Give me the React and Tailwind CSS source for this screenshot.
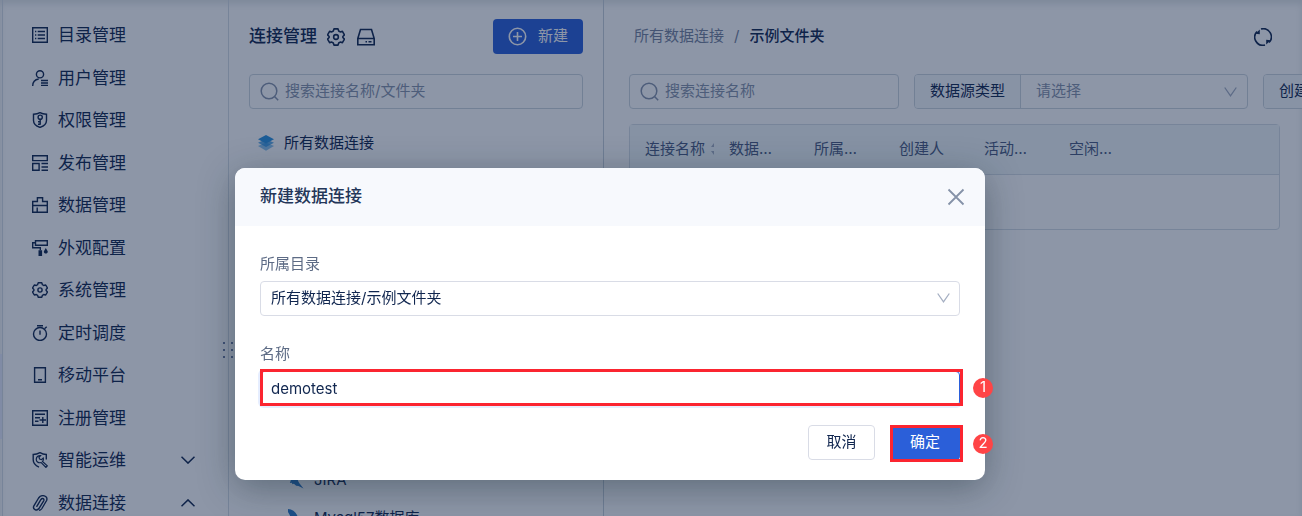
import { useState } from 'react'

function Svg({ children, className = 'size-4', box = 16, width = 1.4 }) {
    return (
        <svg
            className={`${className} shrink-0`}
            viewBox={`0 0 ${box} ${box}`}
            fill="none"
            stroke="currentColor"
            strokeWidth={width}
            aria-hidden="true"
        >
            {children}
        </svg>
    )
}

// rounded six-lobed cog, shared by the menu and the panel header
function Gear() {
    return (
        <>
            <path
                d="M6.200.8h3.600l.6 1.900 1.300.8 2-.5 1.800 3.100-1.400 1.400v1l1.400 1.400-1.800 3.100-2-.5-1.300.8-.6 1.900H6.200l-.6-1.900-1.300-.8-2 .5L.5 9.900l1.400-1.400v-1L.5 6.100 2.300 3l2 .5 1.300-.8z"
                strokeLinejoin="round"
            />
            <circle cx="8" cy="8" r="2.100" />
        </>
    )
}

function Chevron({ className, up = false }) {
    return (
        <svg className={className} viewBox="0 0 14 8" fill="none" stroke="currentColor" strokeWidth="1.5" aria-hidden="true">
            <path d={up ? 'M.5 7.200L7 .9l6.500 6.300' : 'M.5.8L7 7.100 13.500.8'} />
        </svg>
    )
}

function SelectArrow() {
    return (
        <svg
            className="pointer-events-none absolute top-3 right-[10px] h-[10px] w-[13px] text-[#a5afc2]"
            viewBox="0 0 13 10"
            fill="none"
            stroke="currentColor"
            strokeWidth="1.3"
            aria-hidden="true"
        >
            <path d="M.7.5l5.800 8.300L12.300.5" />
        </svg>
    )
}

function SearchIcon() {
    return (
        <Svg className="size-5" box={20} width={1.5}>
            <circle cx="9" cy="9" r="7.800" />
            <path d="M14.500 14.500l3.700 3.700" />
        </Svg>
    )
}

const menu = [
    {
        name: '目录管理',
        icon: <path d="M.7.7h14.600v14.600H.7zM3 4.500h1.300M3 8h1.300M3 11.500h1.300M5.700 4.500H13M5.700 8H13M5.700 11.500H13" />,
    },
    {
        name: '用户管理',
        icon: (
            <>
                <circle cx="8" cy="4.300" r="3.600" />
                <path d="M.7 16c0-4 2.400-6.500 6-7M9 10.500h7M9 13h7M9 15.400h7" />
            </>
        ),
    },
    {
        name: '权限管理',
        icon: (
            <>
                <path d="M8 .7c2 1.200 4.300 1.500 6.500 1.500v6.300c0 3.500-3 5.700-6.500 6.900-3.500-1.200-6.500-3.400-6.500-6.900V2.200C3.700 2.200 6 1.900 8 .7z" />
                <circle cx="8.200" cy="5.200" r="2.100" />
                <path d="M8.200 7.300v5.500M8.200 9.800H6M8.200 12.300H6" />
            </>
        ),
    },
    { name: '发布管理', icon: <path d="M.7.7h14.600v4.900H.7zM.7 8.500h6.400v6.800H.7zM9.500 8.500H16M9.500 12H16M9.500 15.300H16" /> },
    { name: '数据管理', icon: <path d="M.7 4.500h4.700V.7h5.200v3.800h4.700v10.800H.7zM.7 8.500h14.600M5.200 10.500v4.800" /> },
    {
        name: '外观配置',
        icon: (
            <>
                <path d="M3.500.7h11.800v4.500H3.500zM3.500 2.800H.7v5h7.600v2.500" />
                <path d="M6.500 10.300h3.600V16H6.500zM13.800 8l1.900 3.200c.4 1.500-.7 2.400-1.900 2.400s-2.300-.9-1.900-2.400z" fill="currentColor" stroke="none" />
            </>
        ),
    },
    { name: '系统管理', icon: <Gear /> },
    {
        name: '定时调度',
        icon: (
            <>
                <circle cx="8" cy="9" r="6.500" />
                <path d="M5 .8h6M8 5.500v4.200M12.500 3.700l2.200-1.900" />
            </>
        ),
    },
    { name: '移动平台', icon: <path d="M2.600.7h10.800v14.600H2.600zM6 12.700h4" /> },
    {
        name: '注册管理',
        icon: <path d="M.7.7h14.600v14.600H.7zM3 4.200h10M3 7.800h5M3 11.200h3.500M7.500 10h6.500M10.800 7v6" />,
    },
    {
        name: '智能运维',
        arrow: 'down',
        icon: (
            <>
                <path d="M14.300 7.500V2.500C12 2.500 9.700 1.800 8 .7 5.800 1.900 3.500 2.500 1.200 2.500v5.300c0 3.600 2.300 5.800 5.800 7.300" />
                <path
                    d="M8.600 3.600L7 5.300l.6 1.800 1.900.5 1.700-1.600c.5 1.500.1 2.600-.7 3.400l4.800 4.500-1.400 1.500-4.700-4.800c-3 .7-5.200-1.100-4.900-3.700.2-2.100 2.200-3.600 4.300-3.300z"
                    strokeWidth="1.200"
                />
            </>
        ),
    },
    {
        name: '数据连接',
        arrow: 'up',
        icon: (
            <path
                d="M4.800 11.300l4.200-6.800c1.300-1.900 3.700-.6 2.700 1.300l-4.800 7.700c-2 3-6.700.7-5-2.700L6.600 3c2.600-3.900 9.900-2.600 8 2.500l-4.700 8c-.5.8-1.200 1.500-2.200 1.700"
                strokeLinecap="round"
            />
        ),
    },
]

const columns = ['数据…', '所属…', '创建人', '活动…', '空闲…']

function Sidebar() {
    return (
        <aside className="relative flex w-[229px] shrink-0 border-r border-[#d5dde5]">
            <div className="w-[3px] border-r border-[#d5dde5] pt-[354px]">
                <div className="h-[85px] bg-[#e6ebfb]" />
            </div>
            <ul className="flex-1 pt-[23px] pr-[33px] pl-[29px]">
                {menu.map((item) => (
                    <li key={item.name} className="h-6 odd:mb-[19px] even:mb-[18px]">
                        <a href="#" className="flex h-6 items-center gap-[10px] text-[17px] leading-6">
                            <Svg>{item.icon}</Svg>
                            {item.name}
                            {item.arrow && <Chevron className="ml-auto h-2 w-[14px]" up={item.arrow === 'up'} />}
                        </a>
                    </li>
                ))}
            </ul>
            {/* drag handle */}
            <div className="absolute top-[342px] -right-[5px] grid grid-cols-2 gap-x-[6px] gap-y-[5px]">
                {[0, 1, 2, 3, 4, 5].map((dot) => (
                    <span key={dot} className="size-[2px] bg-[#6c7ba0]" />
                ))}
            </div>
        </aside>
    )
}

function SearchBox({ label, className }) {
    return (
        <label className={`flex h-[35px] items-center gap-[5px] rounded border border-[#ccd6de] px-[10px] text-[#8793ab] ${className}`}>
            <SearchIcon />
            <input
                type="search"
                aria-label={label}
                placeholder={label}
                className="min-w-0 flex-1 bg-transparent text-[15px] outline-none placeholder:text-[#8793ab]"
            />
        </label>
    )
}

function DolphinIcon() {
    return (
        <svg className="h-5 w-4 shrink-0" viewBox="0 0 16 20" fill="#2b78c4" aria-hidden="true">
            <path d="M0 1c4 .3 7.500 2.500 9 6 .9 2.200.8 4.200 2.200 6l4.300 5.500-5-2.500-2.300-.3-2.300-2-1.500.5-.5-1.500-2 .3 1-3-1.200-3L0 4z" />
        </svg>
    )
}

function ConnectionPanel() {
    return (
        <section className="w-[375px] shrink-0 border-r border-[#c6d0da] pt-[19px] pr-5 pl-5">
            <header className="flex h-[35px] items-center">
                <h2 className="text-[17px] font-medium">连接管理</h2>
                <button type="button" aria-label="设置" className="ml-[10px]">
                    <Svg className="size-[18px]">
                        <Gear />
                    </Svg>
                </button>
                <button type="button" aria-label="存储" className="ml-3">
                    <Svg className="size-[18px]" box={18} width={1.6}>
                        <path d="M.8 10.500L3.500 1.500h11l2.700 9v6.300H.8zM.8 10.500h16.400M8.500 13.700h1.500M11.500 13.700h3" />
                    </Svg>
                </button>
                <button type="button" className="ml-auto flex h-[35px] items-center gap-[10px] rounded bg-[#2b5fd9] px-[15px] text-[15px] text-white">
                    <Svg className="size-5" box={20} width={1.6}>
                        <circle cx="9.500" cy="9.500" r="8.200" />
                        <path d="M9.500 5v9M5 9.500h9" />
                    </Svg>
                    新建
                </button>
            </header>
            <SearchBox label="搜索连接名称/文件夹" className="mt-5" />
            <ul className="mt-[15px] text-[15px]">
                <li className="flex h-[38px] items-center gap-[10px] pl-[9px]">
                    <svg className="size-4 shrink-0" viewBox="0 0 16 16" fill="#2b93e0" aria-hidden="true">
                        <path d="M0 11l8-3.500 8 3.500-8 4.800z" opacity=".55" />
                        <path d="M0 7.800l8-3.500 8 3.500-8 4.300z" opacity=".75" />
                        <path d="M0 4.200L8 0l8 4.200-8 4.200z" />
                    </svg>
                    所有数据连接
                </li>
                <li className="mt-[299px]">
                    <ul>
                        {['JIRA', 'Mysql57数据库'].map((name) => (
                            <li key={name} className="flex h-[38px] items-center gap-[10px] pl-[39px]">
                                <DolphinIcon />
                                {name}
                            </li>
                        ))}
                    </ul>
                </li>
            </ul>
        </section>
    )
}

function FilterSelect({ label }) {
    return (
        <label className="flex h-[35px] w-[334px] shrink-0 overflow-hidden rounded border border-[#ccd6de] text-[15px]">
            <span className="flex items-center border-r border-[#ccd6de] bg-[#f6f9fc] px-[15px] whitespace-nowrap">{label}</span>
            <span className="relative flex flex-1">
                <select className="w-full appearance-none bg-transparent px-[15px] text-[#8793ab] outline-none">
                    <option>请选择</option>
                </select>
                <SelectArrow />
            </span>
        </label>
    )
}

function DataPanel() {
    return (
        <main className="min-w-0 flex-1 overflow-hidden pt-[19px] pl-[25px]">
            <div className="flex h-[35px] items-center justify-between pr-[30px] pl-[5px] text-[15px]">
                <nav className="flex gap-[10px]">
                    <a href="#" className="text-[#76839d]">所有数据连接</a>
                    <span className="text-[#76839d]">/</span>
                    <span className="font-medium">示例文件夹</span>
                </nav>
                <button type="button" aria-label="刷新">
                    <Svg className="size-[18px]" box={18} width={1.6}>
                        <path d="M7 1.050A8.100 8.100 0 0115 14.500M11 16.900A8.100 8.100 0 013 3.500" />
                        <path d="M1.300 5.800L5.800 1.500v4.800zM16.700 12.200l-4.500 4.300v-4.800z" fill="currentColor" stroke="none" />
                    </Svg>
                </button>
            </div>
            <div className="mt-5 flex gap-[15px]">
                <SearchBox label="搜索连接名称" className="w-[270px] shrink-0" />
                <FilterSelect label="数据源类型" />
                <FilterSelect label="创建人" />
            </div>
            <div className="mt-[15px] mr-[22px] h-[106px] rounded border border-[#d5dde5]">
                <table className="w-full table-fixed text-left text-[15px] text-[#4b5b80]">
                    <thead>
                        <tr className="h-[49px] border-b border-[#d5dde5] bg-[#f2f8fa]">
                            <th className="w-[84px] pl-[15px] font-normal whitespace-nowrap">
                                <span className="flex items-center gap-[6px]">
                                    连接名称
                                    <svg className="h-3 w-[3px] shrink-0" viewBox="0 0 3 12" fill="#a5afc2" aria-hidden="true">
                                        <path d="M3 0v4H0zM3 12V8H0z" />
                                    </svg>
                                </span>
                            </th>
                            {columns.map((name) => (
                                <th key={name} className="w-[85px] pl-[15px] font-normal whitespace-nowrap">{name}</th>
                            ))}
                            <th aria-label="操作" />
                        </tr>
                    </thead>
                </table>
            </div>
        </main>
    )
}

function StepBadge({ children }) {
    return (
        <span className="absolute top-1/2 left-full ml-[13px] flex size-5 -translate-y-1/2 items-center justify-center rounded-full bg-[#ff4446] text-[15px] text-white">
            {children}
        </span>
    )
}

function NewConnectionDialog() {
    const [name, setName] = useState('demotest')

    return (
        <div className="fixed inset-0 flex items-start justify-center bg-[#0c2044]/47 pt-[168px] pr-[82px]">
            <form
                role="dialog"
                aria-labelledby="dialog-title"
                onSubmit={(e) => e.preventDefault()}
                className="w-[750px] rounded-[10px] bg-white text-[15px] shadow-[0_8px_36px_rgba(20,40,50,0.4)]"
            >
                <header className="flex h-[58px] items-center justify-between rounded-t-[10px] bg-[#f7f9fd] pr-5 pl-[25px]">
                    <h1 id="dialog-title" className="text-[17px] font-medium text-[#233659]">新建数据连接</h1>
                    <button type="button" aria-label="关闭" className="text-[#8592a8]">
                        <Svg className="size-[18px]" box={18} width={1.8}>
                            <path d="M1.500 1.500l15 15M16.500 1.500l-15 15" />
                        </Svg>
                    </button>
                </header>
                <div className="px-[25px] pt-[26px] pb-5">
                    <label htmlFor="folder" className="block leading-6 text-[#5d6b85]">所属目录</label>
                    <div className="relative mt-[5px]">
                        <select id="folder" className="h-[35px] w-full appearance-none rounded border border-[#d9dce6] bg-white px-[10px] outline-none">
                            <option>所有数据连接/示例文件夹</option>
                        </select>
                        <SelectArrow />
                    </div>
                    <label htmlFor="name" className="mt-[26px] block leading-6 text-[#5d6b85]">名称</label>
                    <div className="relative mt-[5px]">
                        <input
                            id="name"
                            value={name}
                            onChange={(e) => setName(e.target.value)}
                            className="block h-[35px] w-full rounded border border-[#2b5fd9] px-[10px] ring-2 ring-[#e6eeff] outline-none"
                        />
                        <div className="pointer-events-none absolute -top-[2px] -right-[3px] bottom-0 left-0 border-[3px] border-[#fb2530]">
                            <StepBadge>1</StepBadge>
                        </div>
                    </div>
                    <div className="mt-[19px] flex justify-end gap-[15px]">
                        <button type="button" className="h-[35px] w-[67px] rounded border border-[#d9dce6]">取消</button>
                        <div className="relative">
                            <button type="submit" className="h-[35px] w-[70px] rounded bg-[#2b5fd9] text-white">确定</button>
                            <div className="pointer-events-none absolute top-0 -right-[3px] -bottom-[2px] left-0 border-[3px] border-[#fb2530]">
                                <StepBadge>2</StepBadge>
                            </div>
                        </div>
                    </div>
                </div>
            </form>
        </div>
    )
}

export default function App() {
    return (
        <div className="flex h-screen overflow-hidden bg-white font-['Inter','Noto_Sans_CJK_SC',sans-serif] text-[#10264f] shadow-[inset_0_4px_6px_rgba(20,50,60,0.12)]">
            <Sidebar />
            <ConnectionPanel />
            <DataPanel />
            <NewConnectionDialog />
        </div>
    )
}
